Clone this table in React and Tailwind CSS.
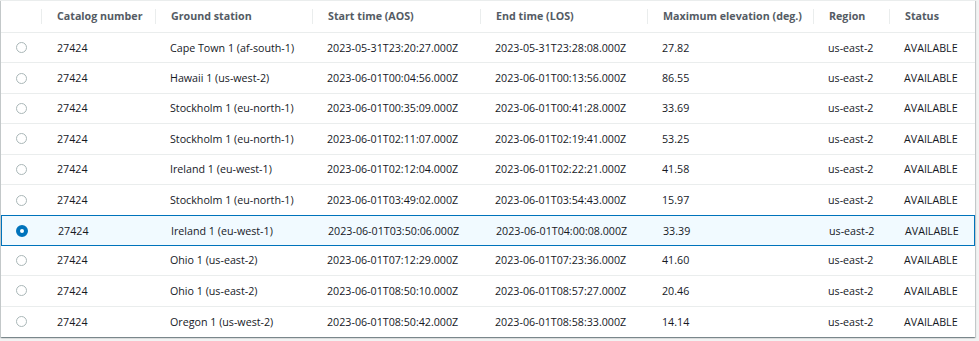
import { useState } from 'react';

const rows = [
  ['27424', 'Cape Town 1 (af-south-1)', '2023-05-31T23:20:27.000Z', '2023-05-31T23:28:08.000Z', '27.82'],
  ['27424', 'Hawaii 1 (us-west-2)', '2023-06-01T00:04:56.000Z', '2023-06-01T00:13:56.000Z', '86.55'],
  ['27424', 'Stockholm 1 (eu-north-1)', '2023-06-01T00:35:09.000Z', '2023-06-01T00:41:28.000Z', '33.69'],
  ['27424', 'Stockholm 1 (eu-north-1)', '2023-06-01T02:11:07.000Z', '2023-06-01T02:19:41.000Z', '53.25'],
  ['27424', 'Ireland 1 (eu-west-1)', '2023-06-01T02:12:04.000Z', '2023-06-01T02:22:21.000Z', '41.58'],
  ['27424', 'Stockholm 1 (eu-north-1)', '2023-06-01T03:49:02.000Z', '2023-06-01T03:54:43.000Z', '15.97'],
  ['27424', 'Ireland 1 (eu-west-1)', '2023-06-01T03:50:06.000Z', '2023-06-01T04:00:08.000Z', '33.39'],
  ['27424', 'Ohio 1 (us-east-2)', '2023-06-01T07:12:29.000Z', '2023-06-01T07:23:36.000Z', '41.60'],
  ['27424', 'Ohio 1 (us-east-2)', '2023-06-01T08:50:10.000Z', '2023-06-01T08:57:27.000Z', '20.46'],
  ['27424', 'Oregon 1 (us-west-2)', '2023-06-01T08:50:42.000Z', '2023-06-01T08:58:33.000Z', '14.14'],
];

// column widths in px, radio column first
const cols = 'grid grid-cols-[40px_114px_157px_168px_167px_166px_76px_1fr]';

const headers = ['Catalog number', 'Ground station', 'Start time (AOS)', 'End time (LOS)', 'Maximum elevation (deg.)', 'Region', 'Status'];

function Radio({ checked }) {
  if (checked) {
    return <span className="block w-[12px] h-[12px] rounded-full border-[4px] border-[#0073bb] bg-white" />;
  }
  return <span className="block w-[11px] h-[11px] rounded-full border border-[#aab7b8] bg-white" />;
}

export default function App() {
  const [selected, setSelected] = useState(6);

  return (
    <div className="w-[979px] h-[341px] bg-[#f2f3f3] pl-[1px] pr-[4px] pb-[4px] overflow-hidden font-['Open_Sans',sans-serif] text-[10.7px]">
      <div className="h-full bg-white shadow-[0_1px_1px_0_rgba(0,28,36,0.3),1px_1px_1px_0_rgba(0,28,36,0.15),-1px_1px_1px_0_rgba(0,28,36,0.15)] border-t border-[#eaeded]">
        {/* Header */}
        <div className={`${cols} h-[32px] items-center border-b border-[#eaeded] text-[#545b64] font-bold`}>
          <div />
          {headers.map((h) => (
            <div key={h} className="flex items-center h-full">
              <span className="w-px h-[15px] bg-[#eaeded] shrink-0" />
              <span className="pl-[15px] whitespace-nowrap">{h}</span>
            </div>
          ))}
        </div>

        {/* Rows */}
        {rows.map((r, i) => {
          const isSel = i === selected;
          const beforeSel = i === selected - 1;
          const last = i === rows.length - 1;
          let border = 'border-b border-[#eaeded]';
          if (isSel) border = 'bg-[#f1faff] border border-[#0073bb]';
          else if (beforeSel || last) border = '';
          return (
            <div
              key={i}
              onClick={() => setSelected(i)}
              className={`${cols} h-[30.4px] items-center text-[#16191f] ${border}`}
            >
              <div className={`flex justify-center ${isSel ? 'pl-0' : 'pl-[1px]'}`}>
                <Radio checked={isSel} />
              </div>
              <div className="pl-[16px] whitespace-nowrap">{r[0]}</div>
              <div className="pl-[15px] whitespace-nowrap">{r[1]}</div>
              <div className="pl-[15px] whitespace-nowrap">{r[2]}</div>
              <div className="pl-[15px] whitespace-nowrap">{r[3]}</div>
              <div className="pl-[15px] whitespace-nowrap">{r[4]}</div>
              <div className="pl-[15px] whitespace-nowrap">us-east-2</div>
              <div className="pl-[15px] whitespace-nowrap">AVAILABLE</div>
            </div>
          );
        })}
      </div>
    </div>
  );
}
